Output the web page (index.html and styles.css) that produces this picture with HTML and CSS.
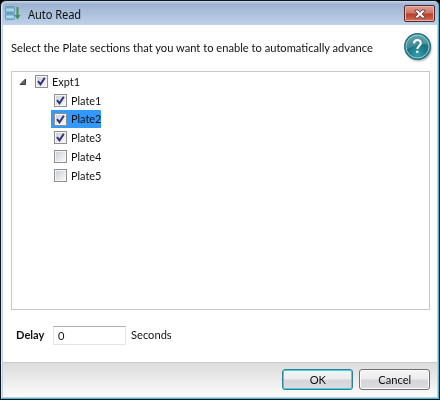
FILE: index.html
```html
<!DOCTYPE html>
<html lang="en">
<head>
<meta charset="utf-8">
<title>Auto Read</title>
<link rel="stylesheet" href="styles.css">
</head>
<body>
<div class="window">
  <header class="titlebar">
    <svg class="app-icon" width="16" height="16" viewBox="0 0 16 16">
      <defs><linearGradient id="plate" x2="0" y2="1"><stop stop-color="#4b8bad"/><stop offset=".55" stop-color="#b4e0f0"/><stop offset="1" stop-color="#6ba3c0"/></linearGradient></defs>
      <rect x=".5" y=".5" width="9" height="6" rx="1" fill="url(#plate)" stroke="#6b9cba"/>
      <rect x=".5" y="7.500" width="9" height="6" rx="1" fill="url(#plate)" stroke="#6b9cba"/>
      <path d="M11.500 1h2v8h2l-3 4.500-3-4.500h2z" fill="#3e9451"/>
    </svg>
    <h1 class="title"><span class="narrow">Auto Read</span></h1>
    <button class="close" aria-label="Close">
      <svg width="12" height="10" viewBox="0 0 12 10"><path d="M1 1h3l2 2.200L8 1h3v1L8 5l3 3v1H8L6 6.800 4 9H1V8l3-3-3-3z" fill="#f6f6f6" stroke="#5b4048" stroke-width=".9"/></svg>
    </button>
  </header>
  <main class="content">
    <div class="intro">
      <p class="prompt narrow">Select the Plate sections that you want to enable to automatically advance</p>
      <svg class="help" width="30" height="31" viewBox="0 0 30 31">
        <defs>
          <radialGradient id="ball" cx=".5" cy=".85" r=".8"><stop stop-color="#32a0aa"/><stop offset=".6" stop-color="#19717f"/><stop offset="1" stop-color="#3f8c98"/></radialGradient>
          <filter id="soft"><feGaussianBlur stdDeviation=".8"/></filter>
        </defs>
        <circle cx="15.500" cy="16" r="13" fill="#777" opacity=".7" filter="url(#soft)"/>
        <circle cx="14.500" cy="14.500" r="13.500" fill="#217786"/>
        <circle cx="14.500" cy="14.500" r="11.500" fill="url(#ball)" stroke="#a3cdd3" stroke-width="1"/>
        <path d="M4 15A10.500 10.500 0 0 1 25 12Q15 12 4 17z" fill="#fff" opacity=".18"/>
        <path d="M11 11.500c0-4.800 6.800-4.500 6.800-.5 0 2.800-3.500 3-3.500 6" fill="none" stroke="#fff" stroke-width="2"/>
        <circle cx="14.300" cy="19.800" r="1.300" fill="#fff"/>
      </svg>
    </div>
    <div class="tree">
      <div class="node root">
        <svg class="expander" width="7" height="7" viewBox="0 0 7 7"><path d="M6.500 1v5.500H1z" fill="#666" stroke="#3c3c3c"/></svg>
        <span class="box"><svg class="tick" width="9" height="9" viewBox="0 0 9 9"><path d="M1 4.200L3.500 7.300 7.800.8" /></svg></span>
        <span class="label narrow">Expt1</span>
      </div>
      <div class="node"><span class="box"><svg class="tick" width="9" height="9" viewBox="0 0 9 9"><path d="M1 4.200L3.500 7.300 7.800.8" /></svg></span><span class="label narrow">Plate1</span></div>
      <div class="node selected"><span class="box"><svg class="tick" width="9" height="9" viewBox="0 0 9 9"><path d="M1 4.200L3.500 7.300 7.800.8" /></svg></span><span class="label narrow">Plate2</span></div>
      <div class="node"><span class="box"><svg class="tick" width="9" height="9" viewBox="0 0 9 9"><path d="M1 4.200L3.500 7.300 7.800.8" /></svg></span><span class="label narrow">Plate3</span></div>
      <div class="node"><span class="box"></span><span class="label narrow">Plate4</span></div>
      <div class="node"><span class="box"></span><span class="label narrow">Plate5</span></div>
    </div>
    <div class="delay">
      <span class="delay-label"><span class="narrow">Delay</span></span>
      <span class="field"><span class="narrow">0</span></span>
      <span class="unit narrow">Seconds</span>
    </div>
  </main>
  <footer class="footer">
    <button class="btn primary"><span class="narrow centered">OK</span></button>
    <button class="btn cancel"><span class="narrow centered">Cancel</span></button>
  </footer>
</div>
</body>
</html>
```
FILE: styles.css
```css
* { box-sizing: border-box; }
body { margin: 0; background: #000; color: #111; font: 12px/18px Lato, sans-serif; }
h1, p { margin: 0; }
svg { display: block; flex: none; }
button { font: inherit; padding: 0; color: #111; }

/* condensed text */
.narrow { display: inline-block; transform: scaleX(.928); transform-origin: left; }
.centered { transform-origin: center; }

.window {
  width: 440px; height: 400px;
  display: flex; flex-direction: column;
  padding: 0 1px 1px 2px;
  border: 1px solid #10171c;
  border-radius: 6px 6px 0 0;
  background: #bed1e8;
  box-shadow: inset -1px -1px #49b5c8, inset 1px 0 #dce8f3;
}

.titlebar {
  height: 24px; flex: none;
  display: flex; align-items: flex-start;
  padding: 5px 3px 0 2px;
  border-radius: 5px 5px 0 0;
  background: linear-gradient(#c8d8ea 0, #9cb3d1 3px, #bed1e8 100%);
}
.title {
  flex: 1; margin-left: 7px;
  font: 400 12px/17px "Noto Sans", sans-serif;
  letter-spacing: -.1px;
}
.close {
  width: 31px; height: 17px; margin-top: -1px;
  display: flex; align-items: center; justify-content: center;
  border: 1px solid #552831; border-radius: 2px;
  background: linear-gradient(#dfa092, #cc7565 48%, #b93925 52%, #d16f56);
  box-shadow: inset 0 0 0 1px #e7b4a8;
}

.content { flex: 1; margin-right: 1px; padding: 13px 8px 0; background: #fff; }
.intro { display: flex; justify-content: space-between; height: 33px; margin-right: -4px; }
.prompt { width: 390px; margin-right: -10px; line-height: 20px; white-space: nowrap; }
.intro .help { margin-top: -6px; }

.tree { height: 239px; margin-right: -1px; border: 1px solid #c8c8c8; }
.node { display: flex; align-items: center; width: 50px; height: 19px; margin-left: 39px; padding-left: 3px; }
.root { width: max-content; margin-left: 4px; }
.expander { margin-right: 9px; }
.box {
  flex: none;
  width: 13px; height: 13px;
  border: 1px solid #8e8f8f;
  background: linear-gradient(135deg, #cdd1d6, #f7f7f7) content-box, #f4f4f4;
  padding: 1px;
}
.tick { fill: none; stroke: #30307c; stroke-width: 2; }
.label { margin-left: 4px; transform: scaleX(.91); }
.selected { height: 18px; background: #3399ff; }

.delay { display: flex; align-items: center; margin-top: 15px; padding-left: 5px; height: 20px; }
.delay-label { width: 37px; font-weight: 700; }
.field { width: 73px; height: 19px; padding: 0 4px; border: 1px solid #e2e3ea; border-top-color: #abadb3; border-radius: 1px; }
.unit { margin-left: 5px; }

.footer {
  height: 35px; flex: none; margin: 0 1px 1px 0;
  display: flex; justify-content: flex-end; gap: 6px;
  padding: 6px 7px 0 0;
  border-top: 1px solid #c9c9c9;
  background: linear-gradient(#dcdcdc, #fbfbfb);
}
.btn {
  width: 71px; height: 21px;
  border: 1px solid #707070; border-radius: 3px;
  background: linear-gradient(#f4f4f4, #ececee 48%, #d5d6da 52%, #dbdce0);
  box-shadow: inset 0 0 0 1px #fbfbfb;
}
.primary { border-color: #2c7f95; box-shadow: inset 0 0 0 1px #45d3e7; }
```
